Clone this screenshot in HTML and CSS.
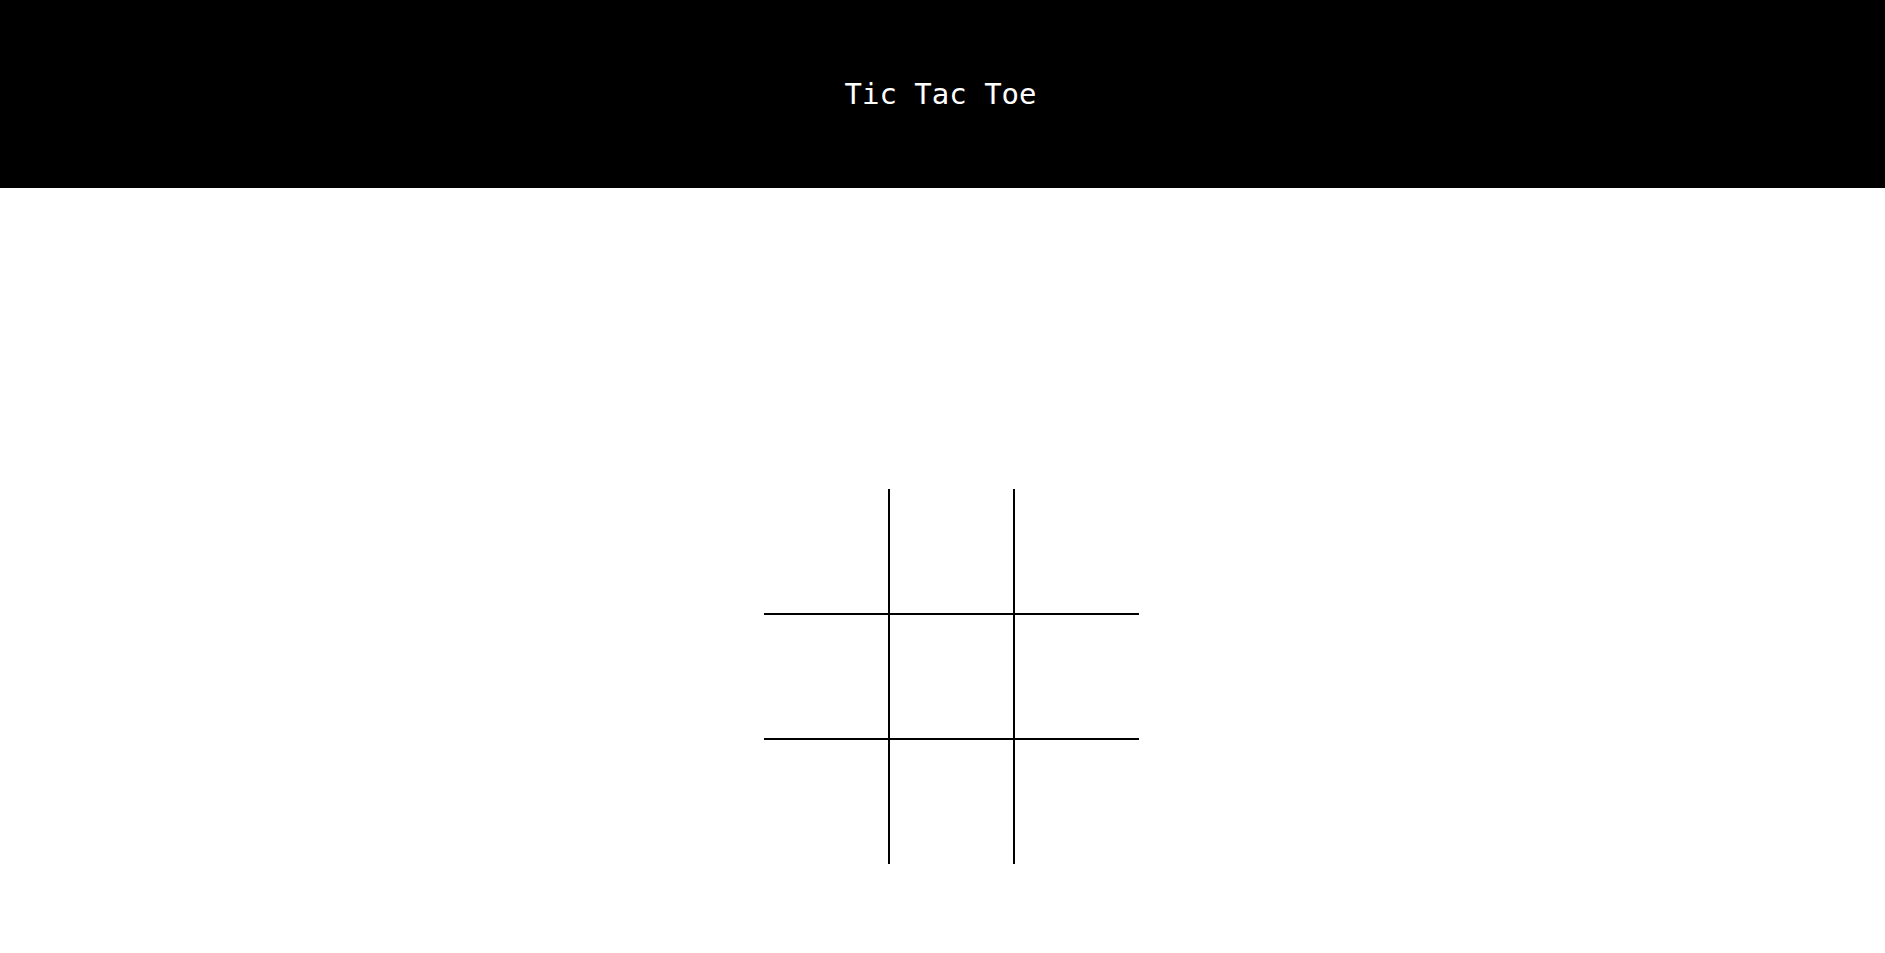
FILE: index.html
```html
<!DOCTYPE html>
<html lang="en">
<head>
<meta charset="utf-8">
<title>Tic Tac Toe</title>
<link rel="stylesheet" href="styles.css">
</head>
<body>
<header class="header">
  <h1 class="title">Tic Tac Toe</h1>
</header>
<main class="main">
  <div class="board">
    <div class="cell c-tl"></div>
    <div class="cell c-tm"></div>
    <div class="cell c-tr"></div>
    <div class="cell c-ml"></div>
    <div class="cell c-mm"></div>
    <div class="cell c-mr"></div>
    <div class="cell c-bl"></div>
    <div class="cell c-bm"></div>
    <div class="cell c-br"></div>
  </div>
</main>
</body>
</html>
```

FILE: styles.css
```css
html, body {
  margin: 0;
  padding: 0;
  background: #ffffff;
}
body {
  font-family: "DejaVu Sans Mono", "Liberation Mono", monospace;
}
.header {
  height: 188px;
  background: #000000;
  display: flex;
  align-items: center;
  justify-content: center;
}
.title {
  margin: 0 4px 0 0;
  color: #ffffff;
  font-weight: normal;
  font-size: 29px;
  line-height: 1;
}
.main {
  display: flex;
  justify-content: center;
  padding-left: 18px;
  padding-top: 301px;
}
.board {
  display: grid;
  grid-template-columns: repeat(3, 125px);
  grid-template-rows: repeat(3, 125px);
}
.cell {
  box-sizing: border-box;
  border: 0 solid #000000;
}
.c-tl { border-right-width: 1px; border-bottom-width: 1px; }
.c-tm { border-left-width: 1px; border-right-width: 1px; border-bottom-width: 1px; }
.c-tr { border-left-width: 1px; border-bottom-width: 1px; }
.c-ml { border-top-width: 1px; border-right-width: 1px; border-bottom-width: 1px; }
.c-mm { border-width: 1px; }
.c-mr { border-top-width: 1px; border-left-width: 1px; border-bottom-width: 1px; }
.c-bl { border-top-width: 1px; border-right-width: 1px; }
.c-bm { border-top-width: 1px; border-left-width: 1px; border-right-width: 1px; }
.c-br { border-top-width: 1px; border-left-width: 1px; }
```
